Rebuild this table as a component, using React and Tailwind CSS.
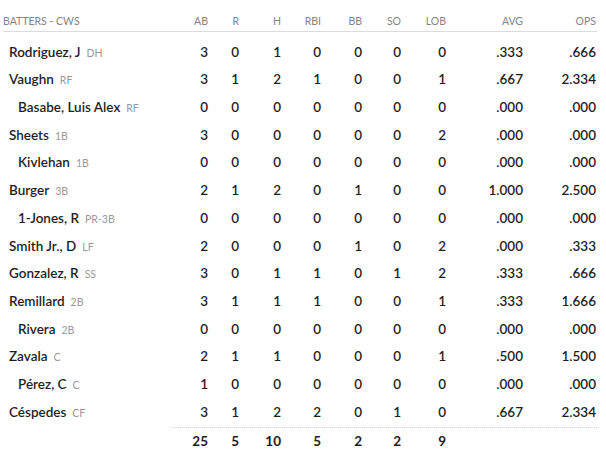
import React from 'react';

const batters = [
  { name: 'Rodriguez, J', pos: 'DH', sub: false, s: [3, 0, 1, 0, 0, 0, 0, '.333', '.666'] },
  { name: 'Vaughn', pos: 'RF', sub: false, s: [3, 1, 2, 1, 0, 0, 1, '.667', '2.334'] },
  { name: 'Basabe, Luis Alex', pos: 'RF', sub: true, s: [0, 0, 0, 0, 0, 0, 0, '.000', '.000'] },
  { name: 'Sheets', pos: '1B', sub: false, s: [3, 0, 0, 0, 0, 0, 2, '.000', '.000'] },
  { name: 'Kivlehan', pos: '1B', sub: true, s: [0, 0, 0, 0, 0, 0, 0, '.000', '.000'] },
  { name: 'Burger', pos: '3B', sub: false, s: [2, 1, 2, 0, 1, 0, 0, '1.000', '2.500'] },
  { name: '1-Jones, R', pos: 'PR-3B', sub: true, s: [0, 0, 0, 0, 0, 0, 0, '.000', '.000'] },
  { name: 'Smith Jr., D', pos: 'LF', sub: false, s: [2, 0, 0, 0, 1, 0, 2, '.000', '.333'] },
  { name: 'Gonzalez, R', pos: 'SS', sub: false, s: [3, 0, 1, 1, 0, 1, 2, '.333', '.666'] },
  { name: 'Remillard', pos: '2B', sub: false, s: [3, 1, 1, 1, 0, 0, 1, '.333', '1.666'] },
  { name: 'Rivera', pos: '2B', sub: true, s: [0, 0, 0, 0, 0, 0, 0, '.000', '.000'] },
  { name: 'Zavala', pos: 'C', sub: false, s: [2, 1, 1, 0, 0, 0, 1, '.500', '1.500'] },
  { name: 'Pérez, C', pos: 'C', sub: true, s: [1, 0, 0, 0, 0, 0, 0, '.000', '.000'] },
  { name: 'Céspedes', pos: 'CF', sub: false, s: [3, 1, 2, 2, 0, 1, 0, '.667', '2.334'] },
];

const heads = ['AB', 'R', 'H', 'RBI', 'BB', 'SO', 'LOB', 'AVG', 'OPS'];
const totals = [25, 5, 10, 5, 2, 2, 9, '', ''];

const cols = 'grid grid-cols-[165px_40px_31px_42px_40px_41px_39px_45px_77px_73px]';

export default function App() {
  return (
    <div className="min-h-screen bg-white pl-[3px] pr-[9px] pt-[13px] font-['Lato',sans-serif]">
      <div className={`${cols} h-[19px] items-center border-b border-[#dcdcdc] text-[10.5px] uppercase text-[#858585]`}>
        <div>Batters - CWS</div>
        {heads.map((h) => (
          <div key={h} className="text-right">{h}</div>
        ))}
      </div>

      <div className="pt-[6px]">
        {batters.map((b) => (
          <div key={b.name} className={`${cols} h-[27.7px] items-center text-[13.5px] font-semibold text-[#1e1e1e]`}>
            <div className={`flex items-baseline gap-[6px] ${b.sub ? 'pl-[15px]' : 'pl-[6px]'}`}>
              <span>{b.name}</span>
              <span className="text-[10.5px] font-normal text-[#9a9a9a]">{b.pos}</span>
            </div>
            {b.s.map((v, i) => (
              <div key={i} className="text-right">{v}</div>
            ))}
          </div>
        ))}
      </div>

      <div className="ml-[170px] mt-[1px] border-t border-dotted border-[#d4d4d4]" />
      <div className={`${cols} h-[26px] items-center text-[13.5px] font-bold text-[#1e1e1e]`}>
        <div />
        {totals.map((v, i) => (
          <div key={i} className="text-right">{v}</div>
        ))}
      </div>
    </div>
  );
}
